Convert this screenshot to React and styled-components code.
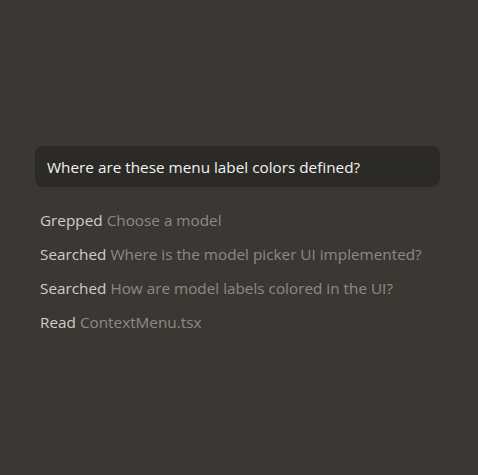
import React from 'react'
import styled, { createGlobalStyle } from 'styled-components'

const Global = createGlobalStyle`
    html, body {
        margin: 0;
        padding: 0;
        background: #3b3834;
    }
    body {
        font-family: "Open Sans", "Noto Sans", sans-serif;
    }
`;

const Page = styled.div`
    width: 478px;
    height: 475px;
    box-sizing: border-box;
    padding: 146px 38px 0 35px;
`;

const Prompt = styled.div`
    background: #2b2a26;
    border-radius: 8px;
    height: 41px;
    display: flex;
    align-items: center;
    padding: 0 12px;
    color: #f2f2f2;
    font-size: 15.3px;
`;

const Steps = styled.div`
    display: flex;
    flex-direction: column;
    gap: 14px;
    padding: 23px 0 0 5px;
`;

const Step = styled.div`
    font-size: 15.3px;
    line-height: 20px;
    color: #8c8a86;
    white-space: nowrap;
`;

const Label = styled.span`
    color: #cfcdca;
`;

const steps = [
    { label: 'Grepped', text: 'Choose a model' },
    { label: 'Searched', text: 'Where is the model picker UI implemented?' },
    { label: 'Searched', text: 'How are model labels colored in the UI?' },
    { label: 'Read', text: 'ContextMenu.tsx' },
];

const App = () => {
    return (
        <Page>
            <Global />
            <Prompt>Where are these menu label colors defined?</Prompt>
            <Steps>
                {steps.map((s, i) => (
                    <Step key={i}>
                        <Label>{s.label}</Label> {s.text}
                    </Step>
                ))}
            </Steps>
        </Page>
    )
}

export default App
